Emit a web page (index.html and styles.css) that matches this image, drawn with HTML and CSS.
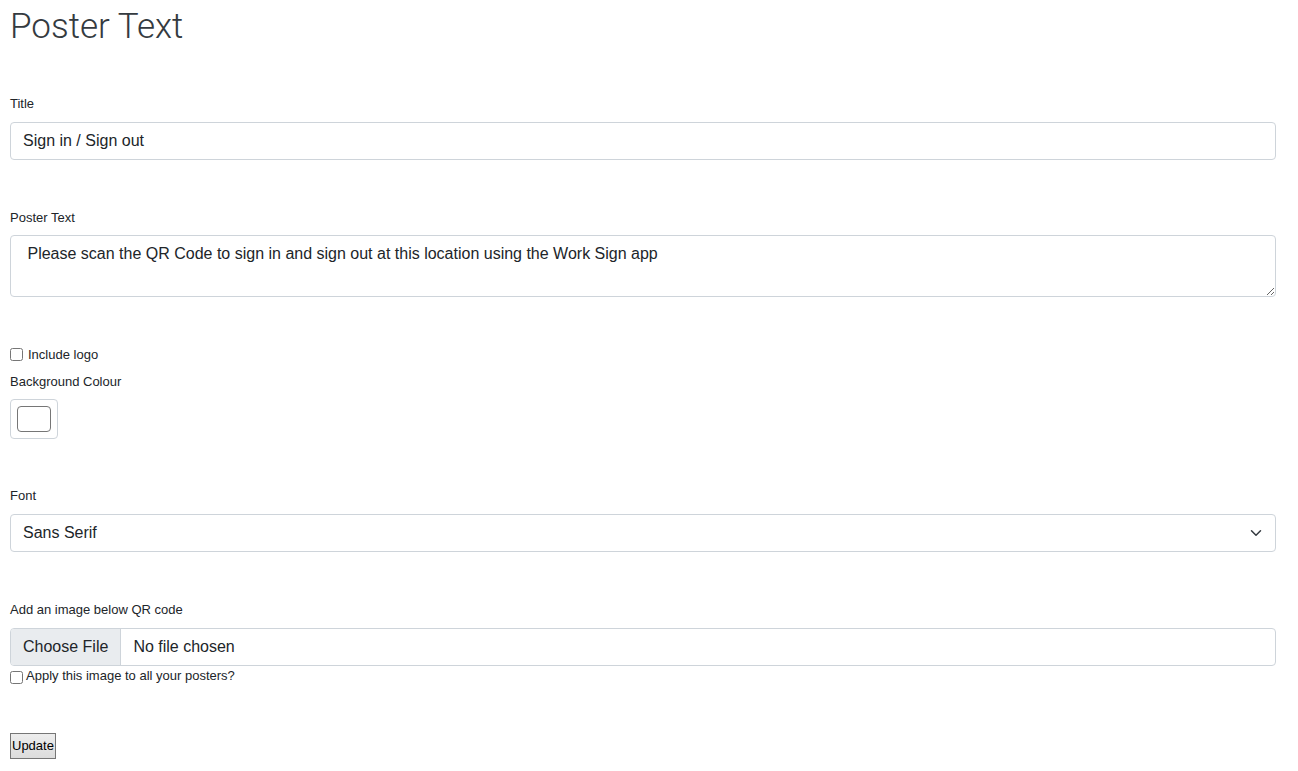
FILE: index.html
```html
<!DOCTYPE html>
<html lang="en">
<head>
<meta charset="utf-8">
<title>Poster Text</title>
<link rel="stylesheet" href="styles.css">
</head>
<body>
<div class="page">
  <h1 class="heading">Poster Text</h1>

  <div class="field field-first">
    <label class="lbl" for="title">Title</label>
    <input class="control" id="title" type="text" value="Sign in / Sign out">
  </div>

  <div class="field">
    <label class="lbl" for="poster">Poster Text</label>
    <textarea class="control area" id="poster" rows="2"> Please scan the QR Code to sign in and sign out at this location using the Work Sign app</textarea>
  </div>

  <div class="check-row">
    <input class="chk" type="checkbox" id="logo">
    <label class="chk-label" for="logo">Include logo</label>
  </div>

  <div class="field field-tight">
    <span class="lbl">Background Colour</span>
    <div class="colour-box"><span class="swatch"></span></div>
  </div>

  <div class="field field-font">
    <label class="lbl" for="font">Font</label>
    <div class="select-wrap">
      <select class="control select" id="font">
        <option>Sans Serif</option>
        <option>Serif</option>
      </select>
      <svg class="chev" width="16" height="12" viewBox="0 0 16 16"><path d="m2 5 6 6 6-6" fill="none" stroke="#343a40" stroke-width="2" stroke-linecap="round" stroke-linejoin="round"/></svg>
    </div>
  </div>

  <div class="field">
    <span class="lbl">Add an image below QR code</span>
    <div class="file-box">
      <span class="file-btn">Choose File</span>
      <span class="file-name">No file chosen</span>
    </div>
    <div class="apply-row">
      <input class="chk chk-apply" type="checkbox" id="apply">
      <label class="apply-label" for="apply">Apply this image to all your posters?</label>
    </div>
  </div>

  <button class="update" type="button">Update</button>
</div>
</body>
</html>
```

FILE: styles.css
```css
* { box-sizing: border-box; }

body {
  margin: 0;
  background: #fff;
  color: #212529;
  font-family: "Liberation Sans", Arial, sans-serif;
  font-size: 13px;
  line-height: 1.5;
}

.page {
  padding: 0 22px 12px 10px;
  display: flex;
  flex-direction: column;
  align-items: stretch;
}

.heading {
  margin: 6px 0 0;
  font-family: Roboto, "Liberation Sans", sans-serif;
  font-weight: 300;
  font-size: 35px;
  line-height: 42px;
  color: #343a40;
}

.field {
  display: flex;
  flex-direction: column;
  margin-top: 48px;
}

.field-first { margin-top: 46px; }
.field-tight { margin-top: 7px; }
.field-font { margin-top: 47px; }

.lbl {
  display: block;
  font-size: 13px;
  line-height: 19.5px;
  margin-bottom: 8px;
  color: #212529;
}

.control {
  display: block;
  width: 100%;
  height: 38px;
  padding: 6px 12px;
  font-family: "Liberation Sans", Arial, sans-serif;
  font-size: 16px;
  line-height: 24px;
  color: #212529;
  background: #fff;
  border: 1px solid #ced4da;
  border-radius: 4px;
  outline: none;
  margin: 0;
}

.area {
  height: 62px;
  resize: vertical;
}

.check-row {
  display: flex;
  align-items: center;
  margin-top: 48px;
  height: 19.5px;
}

.chk {
  width: 13px;
  height: 13px;
  margin: 0;
}

.chk-label {
  margin-left: 5px;
  font-size: 13px;
  line-height: 19.5px;
}

.colour-box {
  width: 48px;
  height: 40px;
  padding: 6px;
  border: 1px solid #ced4da;
  border-radius: 4px;
  background: #fff;
}

.swatch {
  display: block;
  width: 100%;
  height: 100%;
  border: 1px solid #767676;
  border-radius: 4px;
  background: #fff;
}

.select-wrap {
  position: relative;
}

.select {
  appearance: none;
  -webkit-appearance: none;
  padding-right: 36px;
}

.chev {
  position: absolute;
  right: 12px;
  top: 13px;
  pointer-events: none;
}

.file-box {
  display: flex;
  height: 38px;
  margin-top: 1px;
  border: 1px solid #ced4da;
  border-radius: 4px;
  overflow: hidden;
  font-size: 16px;
  line-height: 24px;
}

.file-btn {
  padding: 6px 12px;
  background: #e9ecef;
  border-right: 1px solid #ced4da;
  color: #212529;
}

.file-name {
  padding: 6px 12px;
  color: #212529;
}

.apply-row {
  display: flex;
  align-items: flex-start;
  padding-top: 2px;
  height: 19px;
}

.chk-apply {
  margin: 3px 3px 0 0;
}

.apply-label {
  font-size: 13px;
  line-height: 15px;
}

.update {
  align-self: flex-start;
  margin-top: 48px;
  padding: 2px 1px;
  font-family: "Liberation Sans", Arial, sans-serif;
  font-size: 13px;
  line-height: 19.5px;
  color: #000;
  background: linear-gradient(#ededed, #dcdcdc);
  border: 1px solid #767676;
  border-radius: 0;
}
```
